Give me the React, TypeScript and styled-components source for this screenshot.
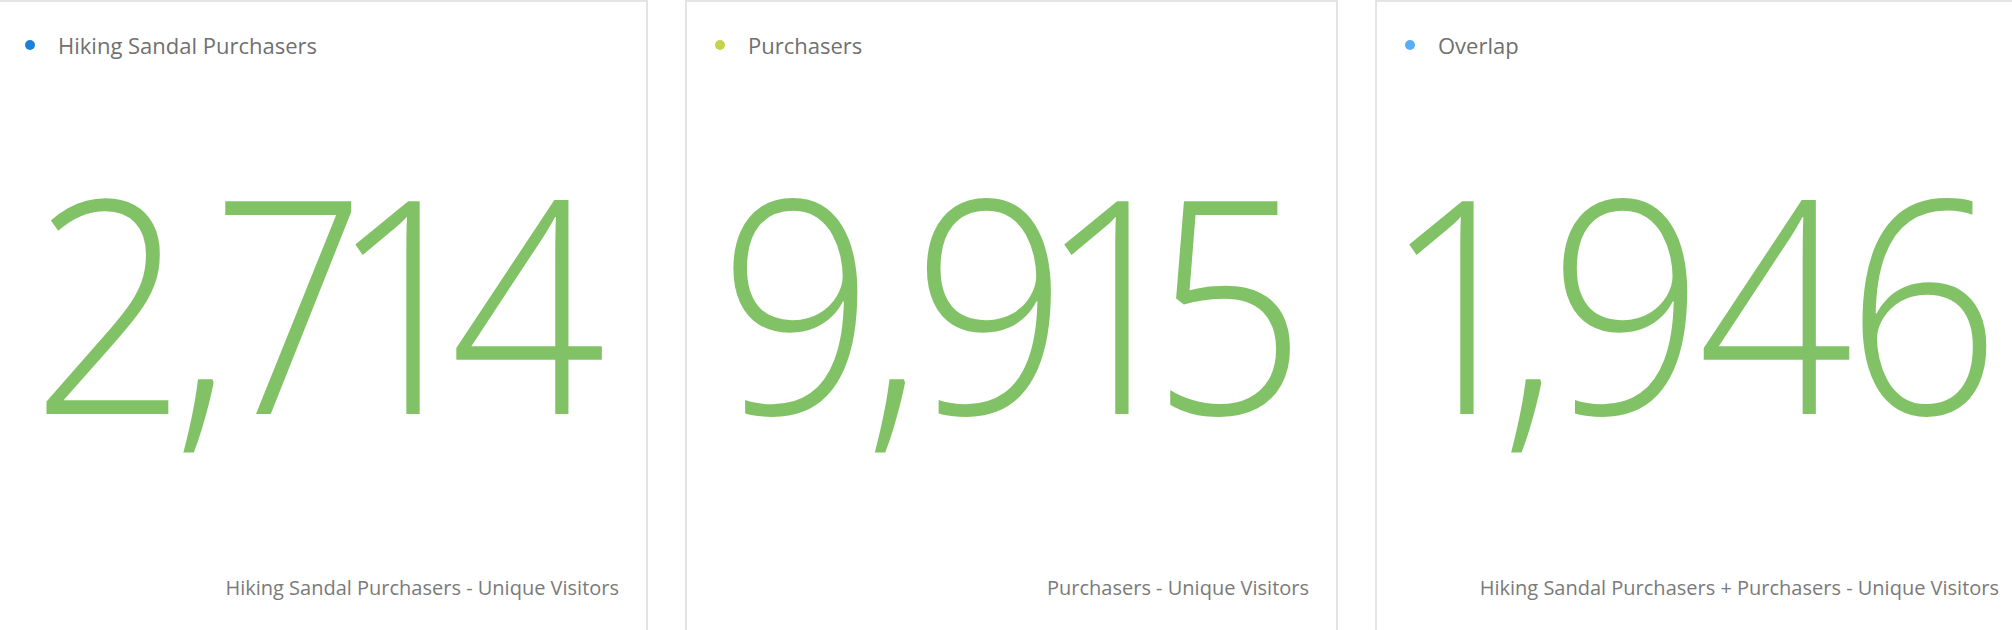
import React from "react";
import styled, { createGlobalStyle } from "styled-components";

const GlobalStyle = createGlobalStyle`
  html, body {
    margin: 0;
    padding: 0;
    background: #ffffff;
    overflow: hidden;
  }
  body {
    font-family: "Open Sans", "Noto Sans", sans-serif;
  }
`;

const Row = styled.div`
  display: flex;
  gap: 37px;
  margin-left: -5px;
  width: 2060px;
`;

const Card = styled.section`
  box-sizing: border-box;
  width: 653px;
  height: 640px;
  flex: 0 0 auto;
  border: 2px solid #e4e4e4;
  background: #ffffff;
  display: flex;
  flex-direction: column;
`;

const Header = styled.div`
  display: flex;
  align-items: center;
  gap: 23px;
  padding: 28px 0 0 28px;
  height: 30px;
`;

const Dot = styled.span<{ $color: string }>`
  width: 10px;
  height: 10px;
  border-radius: 50%;
  background: ${(p) => p.$color};
  flex: 0 0 auto;
`;

const Label = styled.span`
  font-size: 22px;
  font-weight: 400;
  font-stretch: 90%;
  color: #707070;
  line-height: 30px;
`;

const Value = styled.div`
  flex: 1 0 auto;
  display: flex;
  justify-content: center;
  align-items: flex-start;
  padding-top: 89px;
`;

const Digits = styled.span`
  display: inline-block;
  font-size: 298px;
  font-weight: 300;
  font-stretch: 90%;
  font-variant-numeric: proportional-nums;
  line-height: 1;
  color: #82c266;
  letter-spacing: -10px;
  padding-right: 10px;
  transform: scaleX(0.915);
  transform-origin: center top;
  white-space: nowrap;
`;

const Footer = styled.div`
  text-align: right;
  padding: 0 27px 38px 0;
  font-size: 20px;
  font-stretch: 90%;
  color: #7a7a7a;
  line-height: 24px;
`;

const cards = [
  {
    color: "#1a80dc",
    label: "Hiking Sandal Purchasers",
    value: "2,714",
    footer: "Hiking Sandal Purchasers - Unique Visitors",
  },
  {
    color: "#c5d34a",
    label: "Purchasers",
    value: "9,915",
    footer: "Purchasers - Unique Visitors",
  },
  {
    color: "#5aaef5",
    label: "Overlap",
    value: "1,946",
    footer: "Hiking Sandal Purchasers + Purchasers - Unique Visitors",
  },
];

export default function App() {
  return (
    <>
      <GlobalStyle />
      <Row>
        {cards.map((c) => (
          <Card key={c.label}>
            <Header>
              <Dot $color={c.color} />
              <Label>{c.label}</Label>
            </Header>
            <Value>
              <Digits>{c.value}</Digits>
            </Value>
            <Footer>{c.footer}</Footer>
          </Card>
        ))}
      </Row>
    </>
  );
}
